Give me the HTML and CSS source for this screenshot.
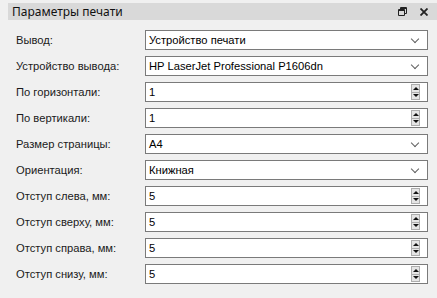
FILE: index.html
```html
<!DOCTYPE html>
<html lang="ru">
<head>
    <meta charset="UTF-8">
    <meta name="viewport" content="width=device-width, initial-scale=1.0">
    <link rel="stylesheet" href="styles.css">
    <title>Параметры печати</title>
</head>
<body>
    <div class="panel">
        <div class="title-bar">
            <span class="title">Параметры печати</span>
            <span class="title-buttons">
                <svg class="restore" width="9" height="9" viewBox="0 0 9 9">
                    <path d="M2.5 0.5h6v6h-2.5M2.5 0.5v2M0.5 2.5h6v6h-6z M0.5 3.5h6 M2.5 1.5h6" fill="none" stroke="#222" stroke-width="1"/>
                </svg>
                <svg class="close" width="8" height="8" viewBox="0 0 8 8">
                    <path d="M0.5 0.5l7 7M7.5 0.5l-7 7" fill="none" stroke="#222" stroke-width="1.8"/>
                </svg>
            </span>
        </div>

        <div class="form">
            <label>Вывод:</label>
            <div class="field combo"><span>Устройство печати</span><i class="chevron"></i></div>

            <label>Устройство вывода:</label>
            <div class="field combo"><span>HP LaserJet Professional P1606dn</span><i class="chevron"></i></div>

            <label>По горизонтали:</label>
            <div class="field spin"><span>1</span><i class="spinner"><b class="up"></b><b class="down"></b></i></div>

            <label>По вертикали:</label>
            <div class="field spin"><span>1</span><i class="spinner"><b class="up"></b><b class="down"></b></i></div>

            <label>Размер страницы:</label>
            <div class="field combo"><span>A4</span><i class="chevron"></i></div>

            <label>Ориентация:</label>
            <div class="field combo"><span>Книжная</span><i class="chevron"></i></div>

            <label>Отступ слева, мм:</label>
            <div class="field spin"><span>5</span><i class="spinner"><b class="up"></b><b class="down"></b></i></div>

            <label>Отступ сверху, мм:</label>
            <div class="field spin"><span>5</span><i class="spinner"><b class="up"></b><b class="down"></b></i></div>

            <label>Отступ справа, мм:</label>
            <div class="field spin"><span>5</span><i class="spinner"><b class="up"></b><b class="down"></b></i></div>

            <label>Отступ снизу, мм:</label>
            <div class="field spin"><span>5</span><i class="spinner"><b class="up"></b><b class="down"></b></i></div>
        </div>
    </div>
</body>
</html>
```

FILE: styles.css
```css
body {
    margin: 0;
    padding: 0;
    background-color: #f0f0f0;
    font-family: 'Liberation Sans', Arial, sans-serif;
    font-size: 12px;
    color: #000;
    width: 437px;
    height: 298px;
    overflow: hidden;
}

.panel {
    padding-top: 3px;
}

.title-bar {
    margin-left: 8px;
    height: 17px;
    background-color: #d9d9d9;
    display: flex;
    align-items: center;
    justify-content: space-between;
    padding-left: 4px;
}

.title {
    font-family: 'Noto Sans', sans-serif;
    font-size: 12px;
    color: #111;
}

.title-buttons {
    display: flex;
    align-items: center;
    gap: 13px;
    padding-right: 9px;
}

.form {
    display: grid;
    grid-template-columns: 129px 283px;
    grid-auto-rows: 20px;
    row-gap: 6px;
    padding-left: 16px;
    margin-top: 10px;
    font-size: 11.2px;
}

.form label {
    display: flex;
    align-items: center;
    color: #1a1a1a;
}

.field {
    box-sizing: border-box;
    height: 20px;
    background-color: #fff;
    border: 1px solid #7a7a7a;
    display: flex;
    align-items: center;
    justify-content: space-between;
    padding-left: 3px;
}

.chevron {
    width: 5px;
    height: 5px;
    border-right: 1px solid #606060;
    border-bottom: 1px solid #606060;
    transform: rotate(45deg);
    margin-right: 9px;
    margin-top: -3px;
}

.spinner {
    display: flex;
    flex-direction: column;
    width: 9px;
    height: 16px;
    margin-right: 7px;
    border: 1px solid #adadad;
    box-sizing: border-box;
    background-color: #e5e5e5;
}

.spinner b {
    flex: 1;
    display: flex;
    align-items: center;
    justify-content: center;
}

.spinner .up {
    border-bottom: 1px solid #adadad;
}

.spinner .up::after {
    content: '';
    border-left: 3px solid transparent;
    border-right: 3px solid transparent;
    border-bottom: 3px solid #111;
}

.spinner .down::after {
    content: '';
    border-left: 3px solid transparent;
    border-right: 3px solid transparent;
    border-top: 3px solid #111;
}
```
